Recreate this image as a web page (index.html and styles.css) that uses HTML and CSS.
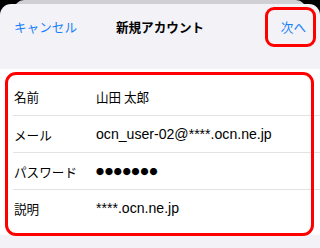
FILE: index.html
```html
<!DOCTYPE html>
<html lang="ja">
<head>
<meta charset="utf-8">
<link rel="stylesheet" href="styles.css">
</head>
<body>
<div class="screen">
  <div class="back-sheet"></div>
  <div class="sheet">
    <header class="nav">
      <span class="nav-cancel">キャンセル</span>
      <span class="nav-title">新規アカウント</span>
      <span class="nav-next">次へ<span class="mark mark-next"></span></span>
    </header>
    <section class="card">
      <div class="row"><span class="label">名前</span><span class="value value-jp">山田 太郎</span></div>
      <div class="row"><span class="label">メール</span><span class="value">ocn_user-02@****.ocn.ne.jp</span></div>
      <div class="row"><span class="label">パスワード</span><span class="value dots">●●●●●●●</span></div>
      <div class="row"><span class="label">説明</span><span class="value">****.ocn.ne.jp</span></div>
      <span class="mark mark-card"></span>
    </section>
  </div>
</div>
</body>
</html>
```

FILE: styles.css
```css
html, body {
  margin: 0;
  padding: 0;
  background: #000;
}
.screen {
  width: 320px;
  height: 248px;
  overflow: hidden;
  font-family: "Noto Sans CJK JP", "Noto Sans", sans-serif;
  color: #000;
}
.back-sheet {
  margin: 0 14px;
  height: 10px;
  background: #cfcfd4;
  border-radius: 10px 10px 0 0;
}
.sheet {
  margin-top: -6px;
  height: 250px;
  background: #f2f2f7;
  border-radius: 11px 11px 0 0;
}
.nav {
  height: 45px;
  padding: 0 14px;
  display: grid;
  grid-template-columns: 1fr auto 1fr;
  align-items: center;
  font-size: 12.6px;
}
.nav-cancel {
  color: #157efb;
  justify-self: start;
}
.nav-title {
  font-weight: bold;
  justify-self: center;
}
.nav-next {
  color: #157efb;
  justify-self: end;
  position: relative;
}
.mark {
  position: absolute;
  border: 3px solid #ff0000;
  box-sizing: border-box;
}
.mark-next {
  left: -16px;
  top: -10px;
  width: 51px;
  height: 40px;
  border-radius: 9px;
}
.card {
  position: relative;
  margin-top: 20px;
  background: #fff;
  padding: 9px 0 9px 13px;
}
.row {
  height: 37px;
  display: flex;
  align-items: center;
  font-size: 12.6px;
  border-top: 1px solid #e3e3e6;
  box-sizing: border-box;
}
.row:first-child {
  border-top: none;
}
.label {
  width: 82px;
  padding-left: 1px;
}
.value {
  font-family: "Liberation Sans", "Noto Sans CJK JP", sans-serif;
  font-size: 14.1px;
}
.value-jp {
  font-family: "Noto Sans CJK JP", sans-serif;
  font-size: 12.6px;
}
.dots {
  font-family: "Noto Sans CJK JP", sans-serif;
  font-size: 8px;
  letter-spacing: 0.9px;
}
.mark-card {
  left: 5px;
  top: 3px;
  width: 309px;
  height: 164px;
  border-radius: 11px;
}
```
